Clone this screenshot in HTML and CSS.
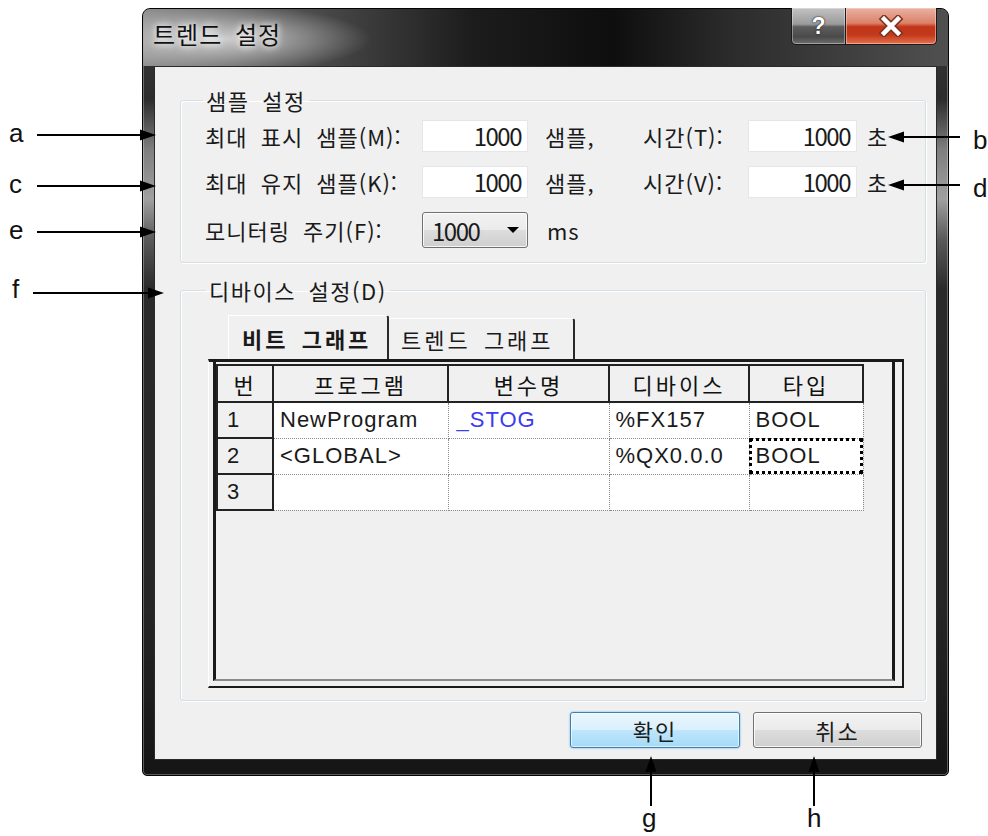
FILE: index.html
```html
<!DOCTYPE html>
<html lang="ko">
<head>
    <meta charset="UTF-8">
    <title>트렌드 설정</title>
    <link rel="stylesheet" href="styles.css">
</head>
<body>
<div id="canvas">
    <div id="win">
        <div class="titlebar">
            <span class="title">트렌드 설정</span>
            <div class="caption">
                <span class="cbtn help">?</span>
                <span class="cbtn close">
                    <svg width="26" height="22" viewBox="0 0 26 22">
                        <path d="M6 4 L20 18 M20 4 L6 18" stroke="#7a3322" stroke-width="7.5" stroke-linecap="square"/>
                        <path d="M6 4 L20 18 M20 4 L6 18" stroke="#fff" stroke-width="4.5" stroke-linecap="square"/>
                    </svg>
                </span>
            </div>
        </div>
        <div class="client">
            <fieldset class="group sample">
                <legend>샘플 설정</legend>
                <div class="rows">
                    <div class="row">
                        <span class="lbl">최대 표시 샘플(M):</span>
                        <span class="edit">1000</span>
                        <span class="unit">샘플,</span>
                        <span class="lbl2">시간(T):</span>
                        <span class="edit edit2">1000</span>
                        <span class="sec">초</span>
                    </div>
                    <div class="row">
                        <span class="lbl">최대 유지 샘플(K):</span>
                        <span class="edit">1000</span>
                        <span class="unit">샘플,</span>
                        <span class="lbl2">시간(V):</span>
                        <span class="edit edit2">1000</span>
                        <span class="sec">초</span>
                    </div>
                    <div class="row row3">
                        <span class="lbl">모니터링 주기(F):</span>
                        <span class="combo">1000<i class="arrow"></i></span>
                        <span class="ms">ms</span>
                    </div>
                </div>
            </fieldset>
            <fieldset class="group device">
                <legend>디바이스 설정(D)</legend>
                <div class="tabs">
                    <span class="tab on">비트 그래프</span>
                    <span class="tab tab2">트렌드 그래프</span>
                </div>
                <div class="gridbox">
                    <div class="gridview">
                        <table>
                            <colgroup>
                                <col style="width:56px"><col style="width:175px"><col style="width:161px"><col style="width:140px"><col style="width:114px">
                            </colgroup>
                            <tr><th>번</th><th>프로그램</th><th>변수명</th><th>디바이스</th><th>타입</th></tr>
                            <tr><td class="no">1</td><td>NewProgram</td><td class="var">_STOG</td><td>%FX157</td><td>BOOL</td></tr>
                            <tr><td class="no">2</td><td>&lt;GLOBAL&gt;</td><td></td><td>%QX0.0.0</td><td class="focus">BOOL</td></tr>
                            <tr><td class="no">3</td><td></td><td></td><td></td><td></td></tr>
                        </table>
                    </div>
                </div>
            </fieldset>
            <div class="btns">
                <span class="btn ok">확인</span>
                <span class="btn">취소</span>
            </div>
        </div>
    </div>

    <svg id="marks" width="988" height="836" viewBox="0 0 988 836">
        <g stroke="#000" stroke-width="2">
            <line x1="37" y1="135" x2="143" y2="135"/>
            <line x1="37" y1="186" x2="143" y2="186"/>
            <line x1="37" y1="232" x2="143" y2="232"/>
            <line x1="33" y1="293" x2="151" y2="293"/>
            <line x1="902" y1="137" x2="960" y2="137"/>
            <line x1="902" y1="185" x2="960" y2="185"/>
            <line x1="651" y1="770" x2="651" y2="806"/>
            <line x1="814" y1="770" x2="814" y2="806"/>
        </g>
        <g fill="#000">
            <polygon points="156,135 140,129.5 140,140.5"/>
            <polygon points="156,186 140,180.5 140,191.5"/>
            <polygon points="156,232 140,226.5 140,237.5"/>
            <polygon points="164,293 148,287.5 148,298.5"/>
            <polygon points="888,137 904,131.5 904,142.5"/>
            <polygon points="888,185 904,179.5 904,190.5"/>
            <polygon points="651,756 645.5,772 656.5,772"/>
            <polygon points="814,756 808.5,772 819.5,772"/>
        </g>
    </svg>
    <span class="tag t-a">a</span>
    <span class="tag t-c">c</span>
    <span class="tag t-e">e</span>
    <span class="tag t-f">f</span>
    <span class="tag t-b">b</span>
    <span class="tag t-d">d</span>
    <span class="tag t-g">g</span>
    <span class="tag t-h">h</span>
</div>
</body>
</html>
```

FILE: styles.css
```css
*{ margin:0; padding:0; box-sizing:border-box;}
body{ background:#fff; font-family:"Noto Sans CJK KR", "Noto Sans", sans-serif; color:#1a1a1a;}
#canvas{ position:relative; width:988px; height:836px; overflow:hidden;}

/* window frame */
#win{ position:absolute; left:142px; top:8px; width:807px; height:768px; border:1px solid #050505; border-radius:8px 8px 5px 5px; padding:0 11px 15px; display:flex; flex-direction:column;
    background:linear-gradient(180deg,#3c3c3c 0,#2c2c2c 90px,#7e7e7e 140px,#a0a0a0 190px,#5a5a5a 230px,#2a2a2a 280px,#262626 600px,#151515 100%);
    box-shadow:inset 0 0 0 1px rgba(255,255,255,.3);}
.titlebar{ height:57px; margin:0 -11px; padding:0 11px 0 10px; display:flex; align-items:flex-start; border-radius:7px 7px 0 0;
    background:radial-gradient(ellipse 150px 34px at 78px 30px, rgba(225,225,225,.85), rgba(200,200,200,0) 100%),
               linear-gradient(90deg,#8d8d8d 0,#5a5a5a 120px,#1c1c1c 330px,#0e0e0e 470px,#2c2c2c 590px,#505050 100%);}
.title{ margin-top:13px; font-size:24px; line-height:24px; letter-spacing:1px; word-spacing:5px; color:#111; text-shadow:0 0 6px #fff, 0 0 10px rgba(255,255,255,.8);}
.caption{ margin-left:auto; margin-top:-1px; display:flex;}
.cbtn{ height:37px; display:flex; align-items:center; justify-content:center; border:1px solid #1a1a1a; border-top:0;}
.help{ width:55px; border-radius:0 0 0 5px; color:#fff; font:bold 23px "Liberation Sans", sans-serif; text-shadow:0 0 2px #222, 0 0 1px #000;
    background:linear-gradient(180deg,#c3c3c3 0,#9a9a9a 45%,#5e5e5e 52%,#4a4a4a 80%,#6f6f6f 100%);
    box-shadow:inset 0 0 0 1px rgba(255,255,255,.35);}
.close{ width:92px; margin-left:-1px; border-radius:0 0 5px 0;
    background:linear-gradient(180deg,#eab1a3 0,#db8169 42%,#c3351a 52%,#c2391c 75%,#e5714d 100%);
    box-shadow:inset 0 0 0 1px rgba(255,220,210,.5);}

.client{ flex:1; background:#f0f0f0; border:1px solid #2a2a2a; padding:0 10px 0 25px; display:flex; flex-direction:column;}

/* group boxes */
.group{ border:1px solid #d5dfe5; border-radius:3px; box-shadow:inset 1px 1px 0 #fff, 1px 1px 0 #fff;}
.group legend{ font-size:22px; line-height:22px; padding:0 3px; margin-left:-2px; letter-spacing:1.5px; word-spacing:5px; color:#1a1a1a;}
.sample{ margin-top:22px; padding:9px 0 14px 24px;}
.rows{ display:flex; flex-direction:column; gap:14px;}
.row{ display:flex; align-items:center; height:32px; font-size:22px; letter-spacing:1px; word-spacing:6px;}
.row3{ height:36px;}
.lbl{ width:217px; white-space:nowrap;}
.edit{ width:106px; height:32px; background:#fff; border:1px solid #e4e6e8; text-align:right; padding-right:6px; font-size:24px; line-height:30px; letter-spacing:-1.5px;}
.edit2{ width:109px;}
.unit{ margin-left:17px; width:98px;}
.lbl2{ width:105px; white-space:nowrap;}
.sec{ margin-left:10px;}
.combo{ width:106px; height:36px; border:1px solid #707070; border-radius:3px; padding-left:9px; display:flex; align-items:center; font-size:24px; letter-spacing:-1.5px;
    background:linear-gradient(#f2f2f2 0,#ebebeb 50%,#dddddd 50%,#cfcfcf 100%); box-shadow:inset 0 0 0 1px rgba(255,255,255,.8);}
.arrow{ margin-left:auto; margin-right:8px; border-left:6px solid transparent; border-right:6px solid transparent; border-top:6px solid #000;}
.ms{ margin-left:19px;}

.device{ margin-top:16px; padding:14px 21px 12px 27px;}
.tabs{ display:flex; height:44px; margin-left:20px;}
.tab{ height:44px; display:flex; align-items:center; font-size:22px; letter-spacing:3px; word-spacing:4px; border-top:1px solid #fff; border-left:1px solid #fff; border-right:2px solid #2a2a2a; border-top-right-radius:3px; white-space:nowrap;}
.tab.on{ width:161px; padding-left:13px; font-weight:bold;}
.tab2{ width:186px; padding-left:12px; height:41px; margin-top:3px; border-left:0;}

.gridbox{ width:696px; height:329px; border-top:3px solid #1a1a1a; border-right:2px solid #1a1a1a; border-bottom:2px solid #1a1a1a; border-left:1px solid #fff; padding:0 7px 5px 4px;}
.gridview{ height:100%; border-left:3px solid #1a1a1a; border-right:3px solid #1a1a1a; border-bottom:2px solid #8a8a8a; background:#f0f0f0; padding-top:2px;}
table{ border-collapse:collapse; table-layout:fixed; width:646px;}
th{ height:37px; background:#f0f0f0; border:2px solid #222; font-weight:normal; font-size:22px; letter-spacing:3px; color:#111;}
td{ height:36px; background:#fff; border:1px dotted #8a8a8a; font:22px "Liberation Sans", sans-serif; letter-spacing:1px; padding-left:6px; color:#1a1a1a; white-space:nowrap;}
td.no{ background:#f0f0f0; border:2px solid #222; padding-left:9px;}
td.var{ color:#3b3bf0; padding-left:8px;}
td.focus{ outline:3px dotted #000; outline-offset:-3px;}

/* buttons */
.btns{ display:flex; justify-content:flex-end; gap:13px; margin-top:11px; padding-right:4px;}
.btn{ width:169px; height:36px; border:1px solid #707070; border-radius:3px; display:flex; align-items:center; justify-content:center; font-size:22px; letter-spacing:2px;
    background:linear-gradient(#f2f2f2 0,#ebebeb 50%,#dddddd 50%,#cfcfcf 100%); box-shadow:inset 0 0 0 1px rgba(255,255,255,.8);}
.btn.ok{ width:170px; border-color:#3c7fb1; background:linear-gradient(#eaf6fd 0,#d9f0fc 50%,#bee6fd 50%,#a7d9f5 100%); box-shadow:inset 0 0 0 1px rgba(255,255,255,.6), 0 0 2px #4aa3df;}

/* callouts */
#marks{ position:absolute; left:0; top:0; pointer-events:none;}
.tag{ position:absolute; font:26px/26px "Liberation Sans", sans-serif; color:#111;}
.t-a{ left:9px; top:120px;}
.t-c{ left:9px; top:171px;}
.t-e{ left:9px; top:217px;}
.t-f{ left:12px; top:276px;}
.t-b{ left:973px; top:127px;}
.t-d{ left:973px; top:175px;}
.t-g{ left:642px; top:805px;}
.t-h{ left:807px; top:805px;}
```
